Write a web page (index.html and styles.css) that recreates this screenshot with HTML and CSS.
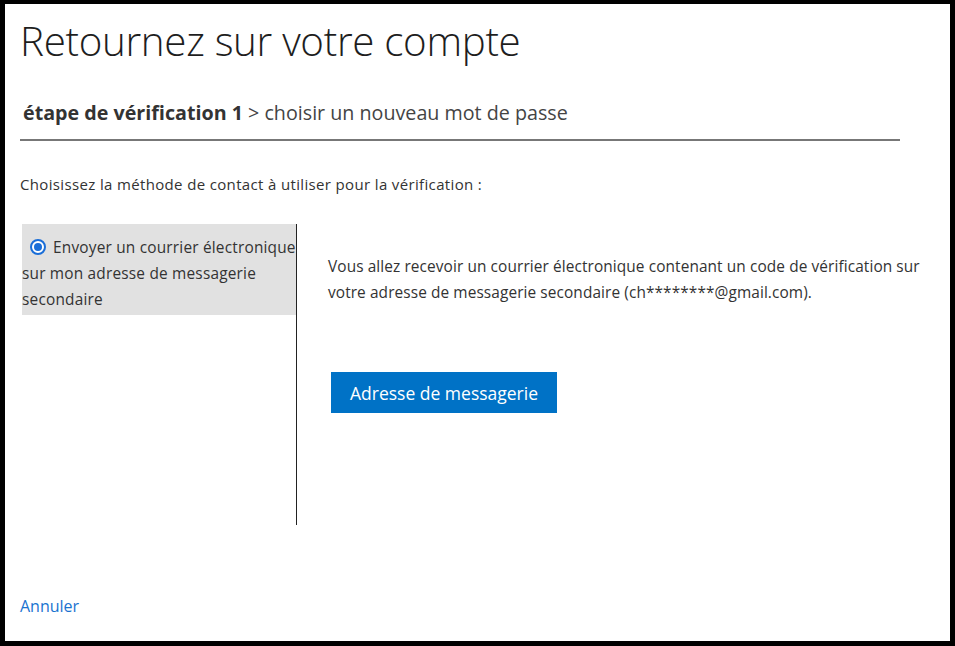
FILE: index.html
```html
<!DOCTYPE html>
<html lang="fr">
<head>
  <meta charset="UTF-8">
  <meta name="viewport" content="width=device-width, initial-scale=1.0">
  <title>Retournez sur votre compte</title>
  <link rel="stylesheet" href="styles.css">
</head>
<body>
<div class="frame">
  <h1 class="title">Retournez sur votre compte</h1>
  <div class="steps"><strong>étape de vérification 1</strong> &gt; choisir un nouveau mot de passe</div>
  <p class="intro">Choisissez la méthode de contact à utiliser pour la vérification :</p>

  <div class="methods">
    <div class="method-list">
      <label class="method selected">
        <span class="radio"></span>Envoyer un courrier électronique<br>sur mon adresse de messagerie<br>secondaire
      </label>
    </div>
    <div class="method-detail">
      <p>Vous allez recevoir un courrier électronique contenant un code de vérification sur votre adresse de messagerie secondaire (ch********@gmail.com).</p>
      <button class="primary">Adresse de messagerie</button>
    </div>
  </div>

  <a class="cancel" href="#">Annuler</a>
</div>
</body>
</html>
```

FILE: styles.css
```css
html, body {
    margin: 0;
    height: 100%;
}
body {
    background: #000;
    padding: 4px 5px 5px 5px;
    box-sizing: border-box;
    font-family: "Open Sans", "Noto Sans", sans-serif;
    color: #333;
}
.frame {
    background: #fff;
    height: 100%;
    padding: 0 0 0 15px;
    box-sizing: border-box;
    display: flex;
    flex-direction: column;
}
.title {
    margin: 9px 0 0 0;
    font-size: 40.3px;
    font-weight: 300;
    line-height: 56px;
    color: #1e1e1e;
    letter-spacing: -0.3px;
}
.steps {
    margin: 30px 50px 0 0;
    padding: 0 0 13px 3px;
    font-size: 19.7px;
    color: #444;
    border-bottom: 2px solid #777;
}
.steps strong {
    font-weight: 700;
    color: #333;
}
.intro {
    margin: 33px 0 0 0;
    font-size: 15px;
    line-height: 20px;
    letter-spacing: 0.35px;
    color: #333;
}
.methods {
    display: flex;
    margin: 30px 0 0 2px;
    height: 301px;
}
.method-list {
    width: 274px;
    border-right: 1px solid #222;
    flex-shrink: 0;
}
.method {
    display: block;
    background: #e1e1e1;
    padding: 11px 0 2px 0;
    font-size: 15.4px;
    line-height: 26px;
    color: #333;
    letter-spacing: 0.2px;
    white-space: nowrap;
}
.radio {
    display: inline-block;
    width: 12px;
    height: 12px;
    border: 2px solid #1a6ed8;
    border-radius: 50%;
    margin: 0 7px -2px 8px;
    position: relative;
    background: #fff;
}
.radio::after {
    content: "";
    position: absolute;
    left: 2px;
    top: 2px;
    width: 8px;
    height: 8px;
    border-radius: 50%;
    background: #1a6ed8;
}
.method-detail {
    padding: 30px 20px 0 31px;
}
.method-detail p {
    margin: 0;
    font-size: 15.4px;
    line-height: 26px;
    letter-spacing: 0.1px;
    color: #333;
}
.primary {
    margin: 66px 0 0 3px;
    width: 226px;
    height: 41px;
    border: none;
    background: #0072c6;
    color: #fff;
    font-family: "Open Sans", "Noto Sans", sans-serif;
    font-size: 17.5px;
}
.cancel {
    margin-top: 70px;
    font-size: 16px;
    color: #1a73d0;
    text-decoration: none;
    align-self: flex-start;
}
```
